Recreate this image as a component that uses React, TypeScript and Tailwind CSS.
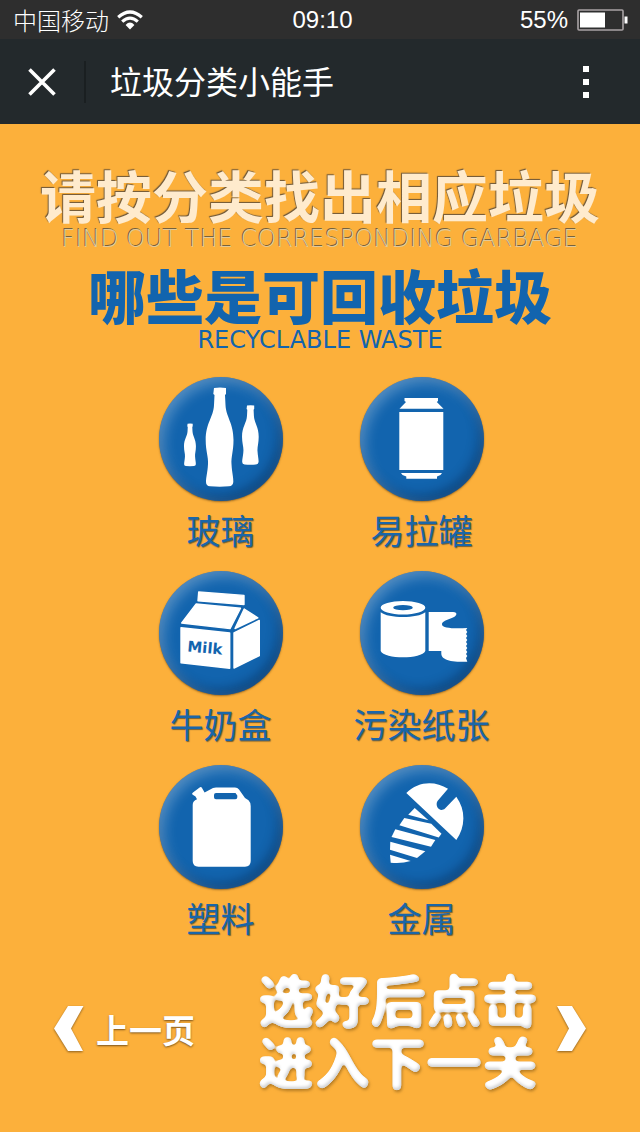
import { useState, type ReactNode } from "react";

const BOTTLE =
  "M55 11Q61 10 67 11V17L66 18L66.5 28C67 40 74.5 46 74.5 63C74.5 74 72 80 72.5 87C73 96 74.5 100 74.3 105Q74 109 70 109.3Q61 110 51 109.3Q47 109 47 105C47 100 48.5 96 49 87C49.5 80 46.7 74 46.7 63C46.7 46 54.5 40 55 28L55.5 18L54.3 17Z";

const GlassIcon = (
  <>
    <path d={BOTTLE} />
    <path d={BOTTLE} transform="translate(4.9 42.1) scale(.43)" />
    <path d={BOTTLE} transform="translate(55 21.9) scale(.6)" />
  </>
);

const CanIcon = (
  <>
    <path d="M44.5 21H78V24L76.8 25L83.5 31.7H39.5L46 25L44.5 24Z" />
    <path d="M39.3 35H83.3V93H39.3Z" />
    <path d="M41 96H82L80.5 98L77 99.5V101.7H46.3V99.5L42.5 98Z" />
  </>
);

const MilkIcon = (
  <>
    <g stroke="#fff" strokeWidth="1.4" strokeLinejoin="round">
      <path d="M39.7 21L85 24.4V33.6L39 29.7Z" />
      <path d="M37.2 33L81.5 37.2L71 57.6L22.7 52Z" />
      <path d="M85.2 38L98.8 46.8L76 57.5Z" />
      <path d="M22 56.8L70.7 62V97.3L22 91.7Z" />
      <path d="M75 61.8L100.3 49.5V84.7L75 97Z" />
    </g>
    <text
      x="28"
      y="80.5"
      transform="rotate(5 28 80.5)"
      fontFamily="DejaVu Sans, sans-serif"
      fontSize="15"
      fontWeight="700"
      fill="#1264ae"
    >
      Milk
    </text>
  </>
);

const PaperIcon = (
  <>
    <path
      fillRule="evenodd"
      d="M20.7 36.7A22.3 6.8 0 0 1 65.3 36.7A22.3 6.8 0 0 1 20.7 36.7ZM33.2 36.7A9.8 2.6 0 0 0 52.8 36.7A9.8 2.6 0 0 0 33.2 36.7Z"
    />
    <path d="M20.7 41.3C28 47.6 58 47.6 65.3 41.3V80C62 88.4 24 88.4 20.7 80Z" />
    <path d="M68.7 41H93Q97 41 96.3 43.5C95 48 82 48.5 82 53.5C82 57 94 58 107.3 57L106 59L107.3 61L106 63L107.3 65L106 67L107.3 69L106 71L107.3 73L106 75L107.3 77L106 79L107.3 81L106 83L107.3 85L106 87L107.3 90.7C98 91 90 90.5 86 88.5C81 86 81.3 84 81.3 80H68.7Z" />
  </>
);

const PlasticIcon = (
  <path
    fillRule="evenodd"
    d="M33.4 29.5Q32.5 28.3 34 27.4L41 22.3Q42.3 21.6 43 23L45.6 27.5L54 22.9Q55 22.6 57 22.6H76Q78.5 22.6 80 24.5L86 33L89.5 35.3Q91.7 37.5 91.7 41V96Q91.7 101.7 86 101.7H39.5Q33.7 101.7 33.7 96V40Q33.7 36 38 34.3L36.5 31.5ZM57 28Q55 28 55 30V32.3Q55 34.3 57 34.3H76.3Q78.3 34.3 78.3 32.3V30.5L76.5 28Z"
  />
);

const MetalIcon = (
  <>
    <path d="M46.3 28C58 16 75 15.5 88 23.7L77.5 36C74.5 41 80 48 85 43.5L96.3 31.7C106 45 105.5 62 96.3 75Z" />
    <path d="M54.7 43L68.5 55.3L48.2 49.7Z" />
    <path d="M44.3 53L71.3 58.7L81.5 68.7L78.7 72.5L39.4 60.3Z" />
    <path d="M35.3 64.3L75.3 75L71 81.7L31.5 72Z" />
    <path d="M30.3 76.7L65.3 86.3L57 93L30 84.7Z" />
    <path d="M30 89.7L50.7 96Q41 99 30.7 97.7Z" />
  </>
);

const items: { name: string; icon: ReactNode }[] = [
  { name: "玻璃", icon: GlassIcon },
  { name: "易拉罐", icon: CanIcon },
  { name: "牛奶盒", icon: MilkIcon },
  { name: "污染纸张", icon: PaperIcon },
  { name: "塑料", icon: PlasticIcon },
  { name: "金属", icon: MetalIcon },
];

function StatusBar() {
  return (
    <div className="grid h-[39px] grid-cols-3 items-center bg-[#2e2e2e] pl-[13px] pr-3 font-['Liberation_Sans',sans-serif] text-2xl text-white">
      <div className="flex items-center gap-2">
        <span className="font-['Noto_Sans_CJK_SC',sans-serif] font-light leading-8">中国移动</span>
        <svg viewBox="0 0 26 20" className="h-5 w-[26px]" fill="none" stroke="#fff" strokeWidth="3.2" aria-hidden="true">
          <path d="M1.2 7.2Q13-3.2 24.8 7.2" />
          <path d="M5.2 11.6Q13 4.6 20.8 11.6" />
          <path d="M8.6 15Q13 10.2 17.4 15L13 19.6Z" fill="#fff" stroke="none" />
        </svg>
      </div>
      <div className="pl-1 text-center">09:10</div>
      <div className="flex items-center justify-end gap-[9px]">
        <span>55%</span>
        <svg viewBox="0 0 51 22" className="h-[22px] w-[51px]" aria-hidden="true">
          <rect x="1" y="1" width="45" height="20" rx="1" fill="none" stroke="#a9a3a5" strokeWidth="1.6" />
          <path d="M3 3.5H28V18.500H3ZM47.500 7.500H50.500V14.500H47.500Z" fill="#fff" />
        </svg>
      </div>
    </div>
  );
}

function TitleBar() {
  return (
    <header className="flex h-[85px] items-center bg-[#23292c] pl-7 pr-[51px] text-white">
      <button type="button" aria-label="关闭">
        <svg viewBox="0 0 28 28" className="size-7" stroke="#fff" strokeWidth="3.6" aria-hidden="true">
          <path d="M1.500 1.500L26.500 26.500M26.500 1.500L1.500 26.500" />
        </svg>
      </button>
      <div className="ml-7 h-[42px] w-0.5 bg-[#1a1f21]" />
      <h1 className="ml-6 pb-1 text-[32px] leading-10">垃圾分类小能手</h1>
      <button type="button" aria-label="更多" className="ml-auto flex flex-col gap-[7px]">
        <span className="size-1.5 bg-white" />
        <span className="size-1.5 bg-white" />
        <span className="size-1.5 bg-white" />
      </button>
    </header>
  );
}

/* Rounds and inflates the glyphs, shades their lower edge and drops a soft shadow. */
function PuffyFilter() {
  return (
    <svg className="absolute size-0" aria-hidden="true">
      <filter id="puffy" x="-5%" y="-5%" width="110%" height="115%" colorInterpolationFilters="sRGB">
        <feGaussianBlur in="SourceAlpha" stdDeviation="2" />
        <feComponentTransfer result="shape">
          <feFuncA type="linear" slope="7" intercept="-2.1" />
        </feComponentTransfer>
        <feFlood floodColor="#ffffff" />
        <feComposite in2="shape" operator="in" result="body" />
        <feOffset in="shape" dx="-1" dy="-2" />
        <feGaussianBlur stdDeviation="1.5" result="lit" />
        <feFlood floodColor="#cfd1d4" />
        <feComposite in2="shape" operator="in" />
        <feComposite in2="lit" operator="out" result="shade" />
        <feGaussianBlur in="shape" stdDeviation="1.5" />
        <feOffset dx="1" dy="2" result="cast" />
        <feFlood floodColor="#7a5010" floodOpacity="0.55" />
        <feComposite in2="cast" operator="in" result="shadow" />
        <feMerge>
          <feMergeNode in="shadow" />
          <feMergeNode in="body" />
          <feMergeNode in="shade" />
        </feMerge>
      </filter>
    </svg>
  );
}

function Arrow({ flip = false }: { flip?: boolean }) {
  return (
    <svg
      viewBox="0 0 30 46"
      className="h-[46px] w-[30px] shrink-0 drop-shadow-[0_1px_1px_rgba(90,60,20,0.7)]"
      fill="#fff"
      aria-hidden="true"
    >
      <path d={flip ? "M16 0H1L13 22.500L1 45H16L30 22.500Z" : "M14 0H29.500L17 22.500L29 45H14L0 22.500Z"} />
    </svg>
  );
}

export default function App() {
  const [picked, setPicked] = useState<string[]>([]);
  const toggle = (name: string) =>
    setPicked((list) => (list.includes(name) ? list.filter((n) => n !== name) : [...list, name]));

  return (
    <div className="min-h-screen bg-[#fcb03b] font-['Noto_Sans_CJK_SC',sans-serif]">
      <StatusBar />
      <TitleBar />
      <main className="flex flex-col items-center pb-10 pt-10">
        <h2 className="whitespace-nowrap text-[56px] font-bold leading-[60px] text-[#ffebcd] [text-shadow:-1px_-1px_1px_#6b563a]">
          请按分类找出相应垃圾
        </h2>
        <p className="mt-[3px] whitespace-nowrap font-['DejaVu_Sans',sans-serif] text-2xl font-extralight leading-6 text-[#e2c999] [text-shadow:-1px_-1px_0_#75623f]">
          FIND OUT THE CORRESPONDING GARBAGE
        </p>
        <h2 className="mt-[11px] whitespace-nowrap text-[58px] font-black leading-[64px] text-[#1264ae]">
          哪些是可回收垃圾
        </h2>
        <p className="mt-0.5 whitespace-nowrap font-['DejaVu_Sans',sans-serif] text-2xl leading-6 text-[#1264ae]">
          RECYCLABLE WASTE
        </p>

        <div className="mt-[25px] grid grid-cols-[138px_138px] gap-x-[63px] gap-y-[17px] pl-0.5">
          {items.map((item) => (
            <button
              key={item.name}
              type="button"
              aria-pressed={picked.includes(item.name)}
              onClick={() => toggle(item.name)}
              className="flex flex-col items-center gap-[5px] rounded-3xl aria-pressed:opacity-70"
            >
              <span className="block size-[124px] rounded-full bg-[#1264ae] shadow-[inset_4px_5px_14px_rgba(255,255,255,0.3),inset_-4px_-5px_12px_rgba(0,20,50,0.4),0px_1px_2px_rgba(90,60,20,0.6)]">
                <svg viewBox="0 0 124 124" className="size-full" fill="#fff" aria-hidden="true">
                  {item.icon}
                </svg>
              </span>
              <span className="whitespace-nowrap text-[34px] font-normal leading-[48px] text-[#1a66a8] [text-shadow:1px_1px_1px_rgba(60,60,50,0.7)]">
                {item.name}
              </span>
            </button>
          ))}
        </div>

        <div className="mt-[25px] flex w-full items-center justify-between px-[54px]">
          <button type="button" className="flex items-center gap-3 text-white">
            <Arrow />
            <span className="whitespace-nowrap text-[33px] font-bold leading-10 [text-shadow:0_1px_2px_rgba(90,60,20,0.8)]">
              上一页
            </span>
          </button>
          <button type="button" className="flex items-center gap-[18px] text-white">
            <span className="whitespace-nowrap text-left text-[56px] font-bold leading-[62px] [filter:url(#puffy)]">
              选好后点击
              <br />
              进入下一关
            </span>
            <Arrow flip />
          </button>
        </div>
      </main>
      <PuffyFilter />
    </div>
  );
}
